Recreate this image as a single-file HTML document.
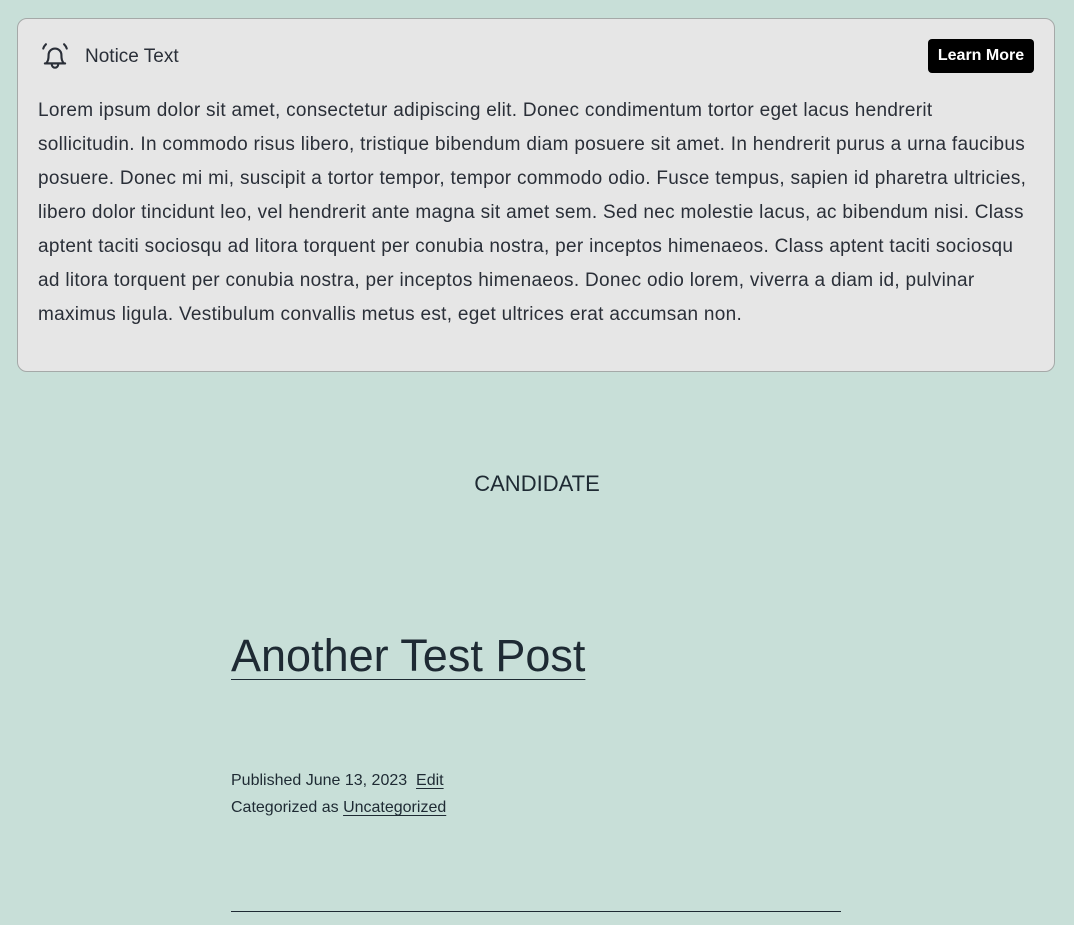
<!DOCTYPE html>
<html><head><style>
body{margin:0;background:#c8dfd8;font-family:"Liberation Sans",sans-serif;color:#1e2a33;width:1074px;height:925px;overflow:hidden;position:relative}
.notice{position:absolute;left:17px;top:18px;width:1036px;height:352px;background:#e6e6e6;border:1px solid #a5a9a8;border-radius:10px}
.bell{position:absolute;left:21px;top:21px}
.nt{position:absolute;left:67px;top:27px;font-size:19px;color:#2a2f38}
.btn{position:absolute;left:910px;top:20px;width:106px;height:34px;background:#000;color:#fff;border-radius:4px;font-weight:bold;font-size:16px;line-height:34px;text-align:center}
.body{position:absolute;left:20px;top:75px;width:1020px;white-space:nowrap;font-size:19px;letter-spacing:0.3px;line-height:34px;color:#2a2f38}
.cand{position:absolute;left:0;width:1074px;top:471px;text-align:center;font-size:22px}
h1{position:absolute;left:231px;top:630px;margin:0;font-weight:normal;font-size:45px;text-decoration:underline;text-decoration-thickness:1px;text-underline-offset:8px}
.meta{position:absolute;left:231px;top:767px;font-size:16px;line-height:27px}
.meta u{text-underline-offset:3px}
hr{position:absolute;left:231px;top:911px;width:610px;margin:0;border:0;border-top:1px solid #1e2a33}
</style></head><body>
<div class="notice">
<svg class="bell" width="32" height="32" viewBox="0 0 30 30" fill="none" stroke="#2a2f38" stroke-width="2" stroke-linecap="round" stroke-linejoin="round"><path d="M6.5 22c2-2 2.5-4 2.5-8a6 6 0 0 1 12 0c0 4 .5 6 2.5 8z"/><path d="M5.5 22h19"/><path d="M12 23a3 3 0 0 0 6 0"/><path d="M4 8c.5-2 1.5-3 2.5-4M26 8c-.5-2-1.5-3-2.5-4"/></svg>
<div class="nt">Notice Text</div>
<div class="btn">Learn More</div>
<div class="body">Lorem ipsum dolor sit amet, consectetur adipiscing elit. Donec condimentum tortor eget lacus hendrerit<br>sollicitudin. In commodo risus libero, tristique bibendum diam posuere sit amet. In hendrerit purus a urna faucibus<br>posuere. Donec mi mi, suscipit a tortor tempor, tempor commodo odio. Fusce tempus, sapien id pharetra ultricies,<br>libero dolor tincidunt leo, vel hendrerit ante magna sit amet sem. Sed nec molestie lacus, ac bibendum nisi. Class<br>aptent taciti sociosqu ad litora torquent per conubia nostra, per inceptos himenaeos. Class aptent taciti sociosqu<br>ad litora torquent per conubia nostra, per inceptos himenaeos. Donec odio lorem, viverra a diam id, pulvinar<br>maximus ligula. Vestibulum convallis metus est, eget ultrices erat accumsan non.</div>
</div>
<div class="cand">CANDIDATE</div>
<h1>Another Test Post</h1>
<div class="meta">Published June 13, 2023 &nbsp;<u>Edit</u><br>Categorized as <u>Uncategorized</u></div>
<hr>
</body></html>
